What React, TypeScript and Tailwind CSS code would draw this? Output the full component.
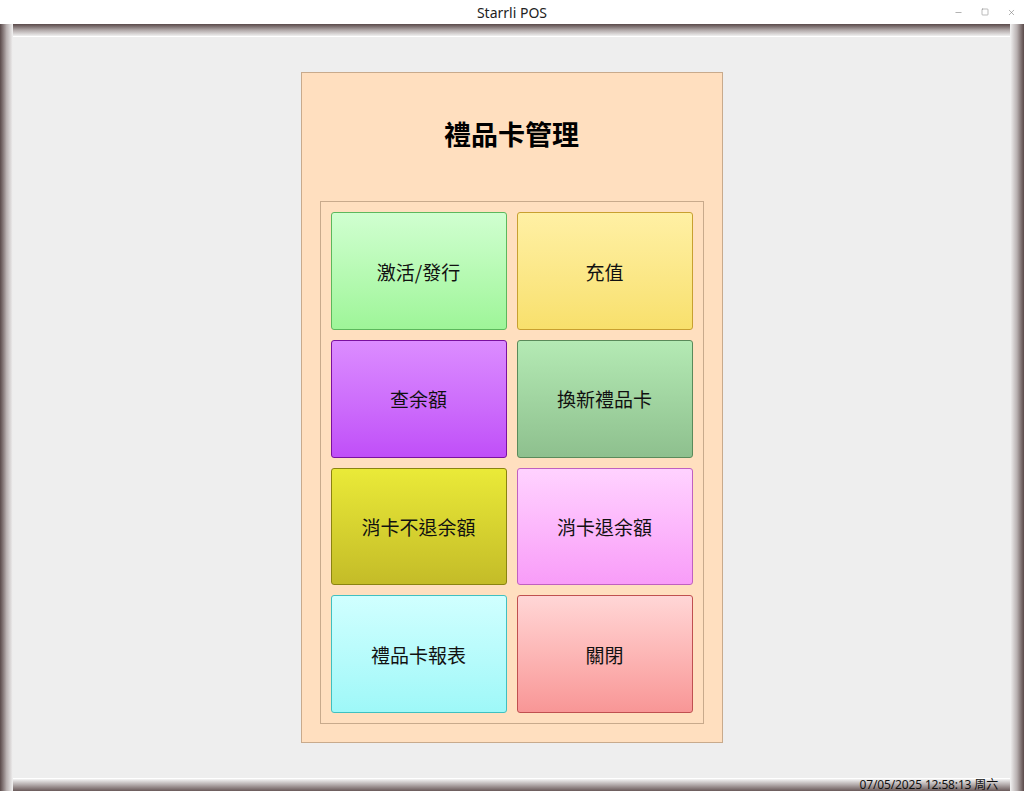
import { Minus, Square, X } from 'lucide-react'

const buttons = [
  { label: '激活/發行', cls: 'from-[#d0ffd0] to-[#9ef598] border-[#5cb85c]' },
  { label: '充值', cls: 'from-[#fff0a4] to-[#f8e06c] border-[#c8a030]' },
  { label: '查余額', cls: 'from-[#dc8cff] to-[#c04ef8] border-[#7a10a0]' },
  { label: '換新禮品卡', cls: 'from-[#b4eab4] to-[#8ec08e] border-[#5a8a5a]' },
  { label: '消卡不退余額', cls: 'from-[#eaea38] to-[#c4bc28] border-[#8a8410]' },
  { label: '消卡退余額', cls: 'from-[#ffd2ff] to-[#f89cf8] border-[#c060c0]' },
  { label: '禮品卡報表', cls: 'from-[#d0ffff] to-[#9ef8f8] border-[#40c0c0]' },
  { label: '關閉', cls: 'from-[#ffd6d6] to-[#f89696] border-[#c05050]' },
]

export default function App() {
  return (
    <div
      className="w-[1024px] h-[791px] flex flex-col bg-white overflow-hidden"
      style={{ fontFamily: '"Noto Sans", "Noto Sans CJK TC", sans-serif' }}
    >
      {/* title bar */}
      <div className="h-[24px] flex items-center relative bg-white">
        <div className="flex-1 text-center text-[14px] text-[#222]">Starrli POS</div>
        <div className="absolute right-0 top-0 h-[24px] flex items-center gap-[18px] pr-[8px] text-[#777]">
          <Minus size={9} strokeWidth={1.5} />
          <Square size={8} strokeWidth={1.5} />
          <X size={9} strokeWidth={1.5} />
        </div>
      </div>

      <div className="flex-1 flex">
        <div className="w-[13px] bg-gradient-to-r from-[#5a4a4a] via-[#b8b0b0] to-[#f2f2f2]" />

        <div className="flex-1 flex flex-col">
          <div className="h-[13px] bg-gradient-to-b from-[#5a4a4a] via-[#b0a8a8] to-[#f0f0f0] border-b border-white" />

          <div className="flex-1 bg-[#eeeeee] flex justify-center pt-[35px]">
            <div className="w-[422px] h-[671px] bg-[#ffdfbf] border border-[#c8aa8c] flex flex-col px-[18px] pb-[18px]">
              <div className="h-[128px] flex items-center justify-center pb-[6px]">
                <h1
                  className="text-[27px] font-bold text-black"
                  style={{ fontFamily: '"Noto Sans CJK TC", sans-serif' }}
                >
                  禮品卡管理
                </h1>
              </div>
              <div className="h-[523px] border border-[#c8aa8c] p-[10px] grid grid-cols-2 grid-rows-4 gap-[10px]">
                {buttons.map((b) => (
                  <button
                    key={b.label}
                    className={`rounded-[3px] border bg-gradient-to-b ${b.cls} flex items-center justify-center pt-[2px] text-[19px] text-[#111]`}
                    style={{ fontFamily: '"Noto Sans CJK TC", sans-serif' }}
                  >
                    {b.label}
                  </button>
                ))}
              </div>
            </div>
          </div>

          <div className="h-[13px] bg-gradient-to-b from-[#f4f4f4] via-[#b0a8a8] to-[#6a5a5a] border-t border-white flex items-center justify-end pr-[12px]">
            <span
              className="text-[12px] leading-[12px] whitespace-nowrap text-[#111] tracking-[-0.15px]"
              style={{ fontFamily: '"Noto Sans", "Noto Sans CJK SC", sans-serif' }}
            >
              07/05/2025 12:58:13 周六
            </span>
          </div>
        </div>

        <div className="w-[14px] bg-gradient-to-r from-[#f2f2f2] via-[#b8b0b0] to-[#5a4a4a]" />
      </div>
    </div>
  )
}
